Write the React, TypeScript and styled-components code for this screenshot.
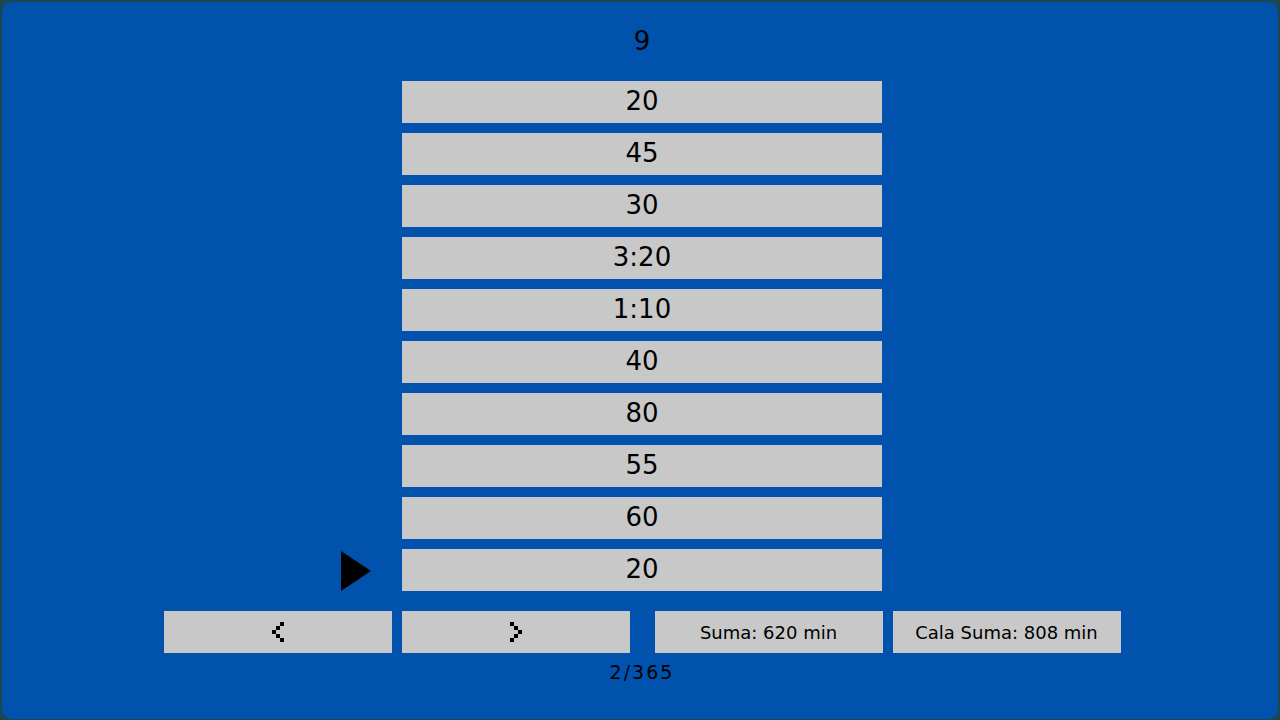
import React from 'react'
import styled, { createGlobalStyle } from 'styled-components'

const GlobalStyle = createGlobalStyle`
  html, body {
    margin: 0;
    padding: 0;
    width: 1280px;
    height: 720px;
    overflow: hidden;
    background-color: #1d4650;
  }
  #root {
    height: 100%;
  }
`

const times = ['20', '45', '30', '3:20', '1:10', '40', '80', '55', '60', '20']
const activeIndex = 9

const Chevron: React.FC<{ dir: 'left' | 'right' }> = ({ dir }) => {
  const cols = dir === 'left' ? [2, 1, 0, 1, 2] : [0, 1, 2, 1, 0]
  return (
    <svg width="12" height="20" viewBox="0 0 12 20">
      {cols.map((c, r) => (
        <rect key={r} x={c * 4} y={r * 4} width="4" height="4" fill="#000" />
      ))}
    </svg>
  )
}

const App: React.FC = () => {
  return (
    <Screen>
      <GlobalStyle />
      <Panel>
        <DayTitle>9</DayTitle>
        <TimeList>
          {times.map((t, i) => (
            <TimeRow key={i} active={i === activeIndex}>
              {t}
            </TimeRow>
          ))}
        </TimeList>
        <Controls>
          <ButtonGroup>
            <Button>
              <Chevron dir="left" />
            </Button>
            <Button>
              <Chevron dir="right" />
            </Button>
          </ButtonGroup>
          <ButtonGroup>
            <Button>Suma: 620 min</Button>
            <Button>Cala Suma: 808 min</Button>
          </ButtonGroup>
        </Controls>
        <PageLabel>2/365</PageLabel>
      </Panel>
    </Screen>
  )
}

export default App

const Screen = styled.div`
  width: 1280px;
  height: 720px;
  padding: 2px 2px 1px 2px;
  box-sizing: border-box;
  font-family: 'DejaVu Sans', 'Liberation Sans', sans-serif;
  color: #000;
`
const Panel = styled.div`
  height: 100%;
  background-color: #0052ac;
  border-radius: 10px;
  display: flex;
  flex-direction: column;
  align-items: center;
  padding-left: 4px;
  box-sizing: border-box;
`
const DayTitle = styled.div`
  margin-top: 19px;
  height: 42px;
  line-height: 40px;
  font-size: 26px;
`
const TimeList = styled.div`
  margin-top: 18px;
  display: flex;
  flex-direction: column;
  gap: 10px;
`
const TimeRow = styled.div<{ active?: boolean }>`
  position: relative;
  width: 480px;
  height: 42px;
  line-height: 40px;
  background-color: #c8c8c8;
  text-align: center;
  font-size: 26px;

  ${props =>
    props.active &&
    `
    &::before {
      content: '';
      position: absolute;
      left: -61px;
      top: 2px;
      width: 0;
      height: 0;
      border-top: 20px solid transparent;
      border-bottom: 20px solid transparent;
      border-left: 30px solid #000;
    }
  `}
`
const Controls = styled.div`
  margin-top: 20px;
  display: flex;
  gap: 25px;
`
const ButtonGroup = styled.div`
  display: flex;
  gap: 10px;
`
const Button = styled.div`
  width: 228px;
  height: 42px;
  background-color: #c8c8c8;
  display: flex;
  align-items: center;
  justify-content: center;
  font-size: 18px;
`
const PageLabel = styled.div`
  margin-top: 9px;
  height: 20px;
  line-height: 20px;
  font-size: 19px;
  letter-spacing: 2px;
`
